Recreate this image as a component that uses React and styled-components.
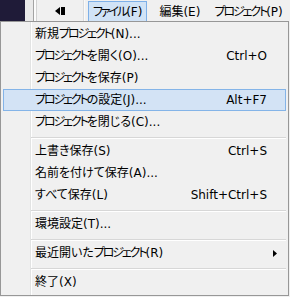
import React from "react";
import styled, { createGlobalStyle } from "styled-components";

const Global = createGlobalStyle`
  html, body { margin: 0; padding: 0; background: #f0f0f0; }
  body {
    font-family: "DejaVu Sans", "Noto Sans CJK JP", sans-serif;
    font-size: 12px;
    color: #000;
    font-feature-settings: "palt";
  }
  #root { width: 290px; height: 297px; overflow: hidden; }
`;

const Window = styled.div`
  display: flex;
  flex-direction: column;
  width: 290px;
  height: 297px;
`;

const MenuBar = styled.div`
  display: flex;
  align-items: stretch;
  height: 21px;
  background: #f0f0f0;
  overflow: hidden;
  & > * { flex-shrink: 0; }
`;

const DarkPane = styled.div`
  width: 25px;
  background: #1f1b38;
`;

const Splitter = styled.div`
  width: 12px;
  background: linear-gradient(
    to right,
    #e9e9e9 0 8px,
    #a3a3a3 8px 9px,
    #fbfbfb 9px 11px,
    #d2d2d2 11px 12px
  );
`;

const Toolbar = styled.div`
  display: flex;
  align-items: center;
  width: 47px;
  padding-left: 18px;
  box-sizing: border-box;
  border-right: 1px solid #dcdcdc;
  box-shadow: 1px 0 0 #fafafa;
`;

const BarGroup = styled.div`
  display: flex;
  margin-left: 4px;
`;

const BarItem = styled.div`
  display: flex;
  align-items: center;
  flex-shrink: 0;
  height: 20px;
  margin-top: 1px;
  margin-right: ${(p) => (p.$open ? 5 : 0)}px;
  padding: 0 ${(p) => (p.$open ? 4 : 6)}px;
  border: 1px solid ${(p) => (p.$open ? "#7eb0e8" : "transparent")};
  border-bottom: none;
  background: ${(p) => (p.$open ? "#d1e3f6" : "transparent")};
  box-sizing: border-box;
  white-space: nowrap;
  line-height: 20px;
`;

const Kana = styled.span`
  letter-spacing: -2.1px;
`;

const JText = ({ children }) =>
  children
    .split(/([\u30A0-\u30FF]+)/)
    .filter(Boolean)
    .map((part, i) =>
      /[\u30A0-\u30FF]/.test(part) ? <Kana key={i}>{part}</Kana> : part
    );

const Menu = styled.div`
  width: 289px;
  height: 275px;
  box-sizing: border-box;
  border: 1px solid #979797;
  padding: 1px 0 2px;
  background-color: #f0f0f0;
  background-image: linear-gradient(
    to right,
    transparent 0 29px,
    #e2e3e3 29px 30px,
    #ffffff 30px 31px,
    transparent 31px
  );
  display: flex;
  flex-direction: column;
`;

const Row = styled.div`
  display: grid;
  grid-template-columns: 31px 1fr auto 18px;
  align-items: center;
  height: 22px;
  margin: 0 2px;
  box-sizing: border-box;
  border: 1px solid ${(p) => (p.$hot ? "#84b4e8" : "transparent")};
  background: ${(p) => (p.$hot ? "#d3e3f5" : "transparent")};
  line-height: 20px;
  white-space: nowrap;
`;

const Label = styled.span`
  grid-column: 2;
`;

const Shortcut = styled.span`
  grid-column: 3;
  text-align: right;
`;

const ArrowCell = styled.span`
  grid-column: 4;
  display: flex;
  align-items: center;
  padding-left: 6px;
`;

const Separator = styled.div`
  height: 7px;
  margin: 0 2px 0 30px;
  box-sizing: border-box;
  padding-top: 4px;
  &::before {
    content: "";
    display: block;
    height: 1px;
    background: #d7d7d7;
    border-bottom: 1px solid #ffffff;
  }
`;

const BackIcon = () => (
  <svg width="11" height="8" viewBox="0 0 11 8">
    <polygon points="0,4 5,0 5,8" fill="#000" />
    <rect x="6" y="0" width="4" height="8" fill="#000" />
  </svg>
);

const SubArrow = () => (
  <svg width="4" height="7" viewBox="0 0 4 7">
    <polygon points="0,0 4,3.5 0,7" fill="#000" />
  </svg>
);

const items = [
  { label: "新規プロジェクト(N)..." },
  { label: "プロジェクトを開く(O)...", key: "Ctrl+O" },
  { label: "プロジェクトを保存(P)" },
  { label: "プロジェクトの設定(J)...", key: "Alt+F7", hot: true },
  { label: "プロジェクトを閉じる(C)..." },
  { sep: true },
  { label: "上書き保存(S)", key: "Ctrl+S" },
  { label: "名前を付けて保存(A)..." },
  { label: "すべて保存(L)", key: "Shift+Ctrl+S" },
  { sep: true },
  { label: "環境設定(T)..." },
  { sep: true },
  { label: "最近開いたプロジェクト(R)", sub: true },
  { sep: true },
  { label: "終了(X)" },
];

export default function App() {
  return (
    <>
      <Global />
      <Window>
        <MenuBar>
          <DarkPane />
          <Splitter />
          <Toolbar>
            <BackIcon />
          </Toolbar>
          <BarGroup>
            <BarItem $open>
              <JText>ファイル(F)</JText>
            </BarItem>
            <BarItem>
              <JText>編集(E)</JText>
            </BarItem>
            <BarItem>
              <JText>プロジェクト(P)</JText>
            </BarItem>
          </BarGroup>
        </MenuBar>
        <Menu>
          {items.map((it, i) =>
            it.sep ? (
              <Separator key={i} />
            ) : (
              <Row key={i} $hot={it.hot}>
                <Label>
                  <JText>{it.label}</JText>
                </Label>
                {it.key && <Shortcut>{it.key}</Shortcut>}
                {it.sub && (
                  <ArrowCell>
                    <SubArrow />
                  </ArrowCell>
                )}
              </Row>
            )
          )}
        </Menu>
      </Window>
    </>
  );
}
